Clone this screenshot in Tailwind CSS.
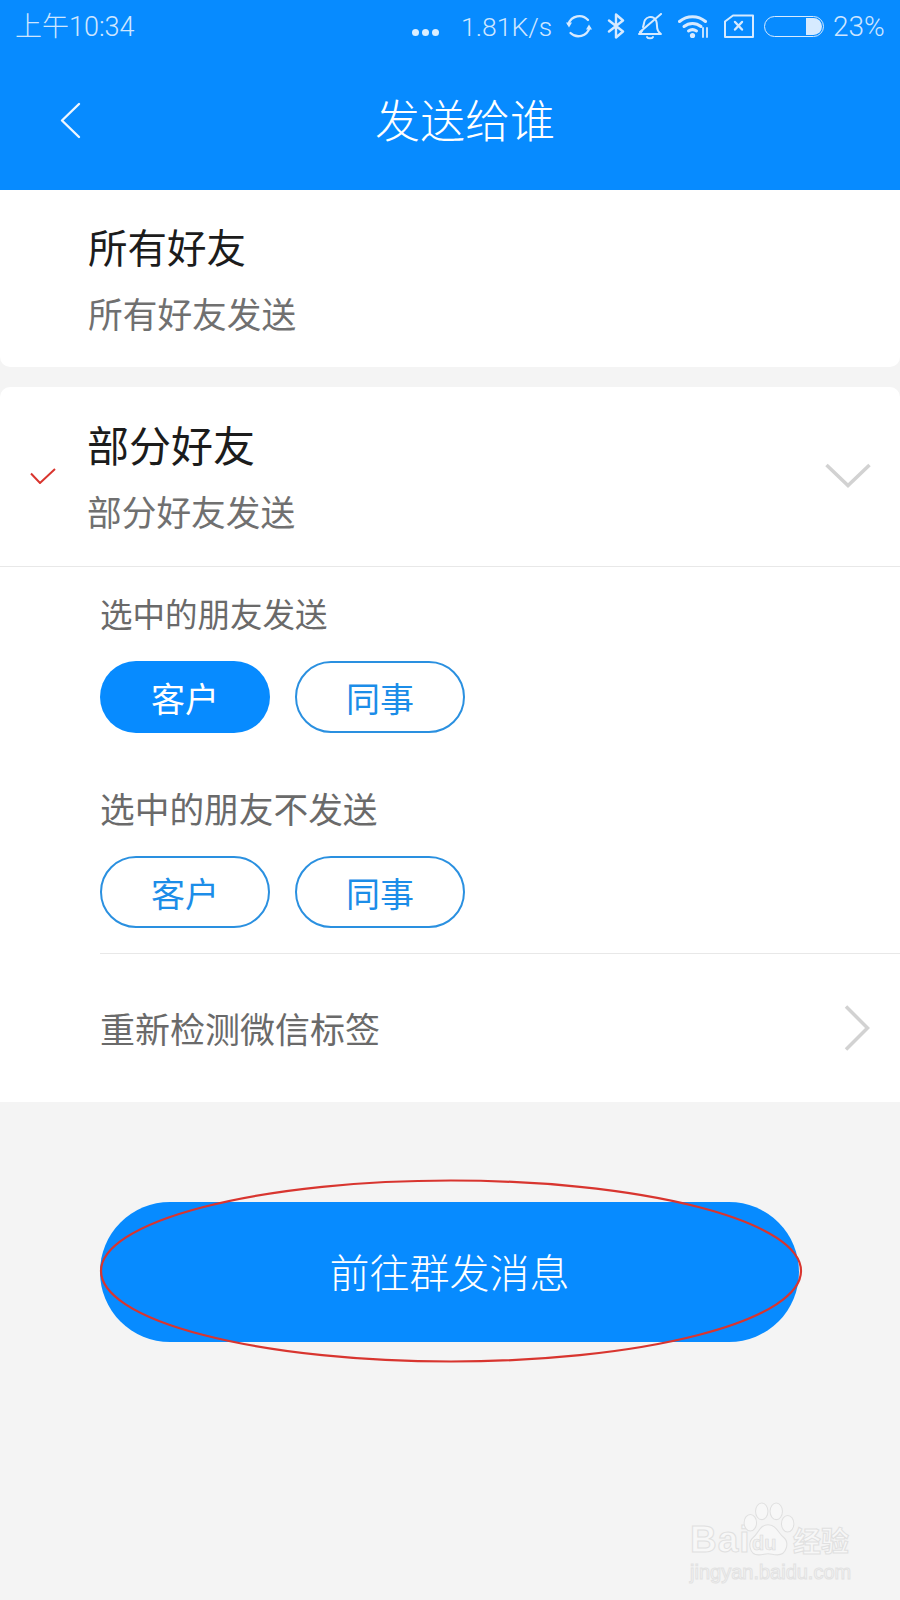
<!DOCTYPE html>
<html>
<head>
  <meta charset="UTF-8">
  <meta name="viewport" content="width=device-width, initial-scale=1.0">
  <script src="https://cdn.jsdelivr.net/npm/@tailwindcss/browser@4"></script>
</head>
<body class="bg-[#f4f4f4]">
  <div class="relative w-[900px] h-[1600px] overflow-hidden bg-[#f4f4f4] font-['Noto_Sans_CJK_SC',sans-serif]">
    <!-- header -->
    <header class="h-[190px] bg-[#078bff]">
      <div class="flex items-center h-[52px] pl-[15px] text-[#cfe6ff] font-['Roboto','Noto_Sans_CJK_SC',sans-serif] font-light">
        <span class="text-[27px] leading-[52px] pt-[1px] w-[397px] whitespace-nowrap">上午10:34</span>
        <div class="flex gap-[3px] w-[49px] pt-[12px]">
          <span class="w-[7px] h-[7px] rounded-full bg-[#dceeff]"></span>
          <span class="w-[7px] h-[7px] rounded-full bg-[#dceeff]"></span>
          <span class="w-[7px] h-[7px] rounded-full bg-[#dceeff]"></span>
        </div>
        <span class="text-[26.500px] leading-[52px] pt-[1px] w-[105px] whitespace-nowrap">1.81K/s</span>
        <svg class="w-[26px] h-[26px] mr-[15px]" viewBox="0 0 26 26" fill="none" stroke="#d6eaff" stroke-width="2.300" stroke-linecap="round">
          <path d="M22 7A11.500 11.500 0 0 0 2.500 11"/>
          <path d="M4.500 20A11.500 11.500 0 0 0 23.500 15"/>
          <path d="M0 9.500h6l-3 5z" fill="#d6eaff" stroke="none"/>
          <path d="M20 16.500h6l-3-5z" fill="#d6eaff" stroke="none"/>
        </svg>
        <svg class="w-[18px] h-[26px] mr-[12px]" viewBox="0 0 18 26" fill="none" stroke="#d6eaff" stroke-width="2.400" stroke-linejoin="round" stroke-linecap="round">
          <path d="M2 7.500l14 11-7 6V1.500l7 6-14 11"/>
        </svg>
        <svg class="w-[26px] h-[27px] mr-[15px]" viewBox="0 0 26 27" fill="none" stroke="#d6eaff" stroke-width="2" stroke-linecap="round" stroke-linejoin="round">
          <path d="M6 14c1-2 .8-5 2-7 2-3 6-4 9-2 3 2 3 5 3 8 0 3 1 6 4 8H2c1.500-1 2.500-2 3.200-3.500"/>
          <path d="M10 24c1 1.800 5 1.800 6 0"/>
          <path d="M3 19L24 1"/>
        </svg>
        <svg class="w-[33px] h-[26px] mr-[13px]" viewBox="0 0 33 26" fill="none" stroke="#d6eaff" stroke-linecap="round">
          <path d="M1.500 8.500a20 20 0 0 1 26 0" stroke-width="3"/>
          <path d="M6 13.500a13.500 13.500 0 0 1 17 0" stroke-width="3"/>
          <path d="M10.500 18a7 7 0 0 1 8 0" stroke-width="3"/>
          <circle cx="14.500" cy="22.500" r="2.600" fill="#d6eaff" stroke="none"/>
          <path d="M25 15v9M29 15v9" stroke-width="1.800"/>
        </svg>
        <svg class="w-[30px] h-[24px] mr-[10px]" viewBox="0 0 30 24" fill="none" stroke="#d6eaff" stroke-width="2" stroke-linejoin="round" stroke-linecap="round">
          <path d="M1 7.500L9 1.500h20V23H1z"/>
          <path d="M11 8l7 7.500M18 8l-7 7.500" stroke-width="2.400"/>
        </svg>
        <div class="relative w-[60px] h-[21px] mr-[9px] rounded-full border-[1.500px] border-[#d6eaff]">
          <span class="absolute right-[1px] top-[1px] bottom-[1px] w-[16px] rounded-r-full bg-[#d6eaff]"></span>
        </div>
        <span class="text-[28px] leading-[52px] pt-[1px] whitespace-nowrap">23%</span>
      </div>
      <div class="relative flex items-center justify-center h-[138px]">
        <svg class="absolute left-[59px] top-[50px] w-[22px] h-[37px]" viewBox="0 0 22 37" fill="none" stroke="#eef6ff" stroke-width="2.400" stroke-linecap="round" stroke-linejoin="round">
          <path d="M20 2L3 18.500 20 35"/>
        </svg>
        <h1 class="text-[45px] leading-[60px] text-white font-light ml-[30px] pb-[4px]">发送给谁</h1>
      </div>
    </header>

    <!-- all friends -->
    <section class="h-[177px] bg-white rounded-b-[10px] pl-[88px] pt-[32px]">
      <div class="text-[39.500px] leading-[48px] text-[#1c1c1c]">所有好友</div>
      <div class="mt-[23px] text-[34.700px] leading-[40px] text-[#707070]">所有好友发送</div>
    </section>

    <!-- some friends -->
    <section class="mt-[20px] h-[180px] bg-white rounded-t-[10px] flex items-center border-b border-[#e8e8e8]">
      <svg class="w-[26px] h-[16px] ml-[30px] mt-[-2px]" viewBox="0 0 26 16" fill="none" stroke="#d9352e" stroke-width="2">
        <path d="M1 5.500L10 15 25 1"/>
      </svg>
      <div class="ml-[32px] flex-1 pb-[3px]">
        <div class="text-[42px] leading-[48px] text-[#1c1c1c] ml-[-1px]">部分好友</div>
        <div class="mt-[23px] text-[34.700px] leading-[40px] text-[#707070] ml-[-1px]">部分好友发送</div>
      </div>
      <svg class="w-[46px] h-[25px] mr-[29px] mt-[-2px]" viewBox="0 0 46 25" fill="none" stroke="#d2d2d2" stroke-width="3.500">
        <path d="M1.500 2L23 22.500 44.500 2"/>
      </svg>
    </section>

    <!-- expanded tags -->
    <section class="h-[535px] bg-white pl-[100px] pt-[26px]">
      <div class="text-[32.500px] leading-[40px] text-[#6a6a6a]">选中的朋友发送</div>
      <div class="mt-[28px] flex gap-[25px]">
        <button class="w-[170px] h-[72px] rounded-full bg-[#078bff] text-white text-[34px]">客户</button>
        <button class="w-[170px] h-[72px] rounded-full border-[2.500px] border-[#2a90e0] text-[#1c8de8] text-[34px]">同事</button>
      </div>
      <div class="mt-[55px] text-[34.700px] leading-[40px] text-[#6a6a6a]">选中的朋友不发送</div>
      <div class="mt-[28px] flex gap-[25px]">
        <button class="w-[170px] h-[72px] rounded-full border-[2.500px] border-[#2a90e0] text-[#1c8de8] text-[34px]">客户</button>
        <button class="w-[170px] h-[72px] rounded-full border-[2.500px] border-[#2a90e0] text-[#1c8de8] text-[34px]">同事</button>
      </div>
      <div class="mt-[25px] border-t border-[#e8e8e8] h-[148px] flex items-center pr-[30px]">
        <span class="flex-1 text-[35px] leading-[40px] text-[#6a6a6a]">重新检测微信标签</span>
        <svg class="w-[26px] h-[46px]" viewBox="0 0 26 46" fill="none" stroke="#d2d2d2" stroke-width="3.500">
          <path d="M2 1.500L23.500 23 2 44.500"/>
        </svg>
      </div>
    </section>

    <!-- action button -->
    <button class="block mt-[100px] ml-[100px] w-[699px] h-[140px] rounded-full bg-[#078bff] text-white text-[40px] font-light pb-[2px]">前往群发消息</button>

    <!-- hand drawn annotation over the button -->
    <svg class="absolute left-[98px] top-[1178px] w-[706px] h-[186px]" viewBox="0 0 706 186" fill="none" stroke="#d8352f" stroke-width="2.200">
      <ellipse cx="353" cy="93" rx="350" ry="90.500"/>
    </svg>

    <!-- watermark -->
    <div class="absolute left-[690px] top-[1500px] w-[170px] h-[84px] font-['Liberation_Sans',sans-serif] text-[#f7f7f7]">
      <span class="absolute left-[0px] top-[17px] text-[37px] leading-[46px] font-bold tracking-[1px] [-webkit-text-stroke:1px_#e0e0e0]">Bai</span>
      <svg class="absolute left-[50px] top-[2px] w-[58px] h-[56px]" viewBox="0 0 50 54" fill="#f7f7f7" stroke="#e0e0e0" stroke-width="1">
        <ellipse cx="7" cy="20" rx="6" ry="8"/>
        <ellipse cx="18" cy="9" rx="6" ry="8"/>
        <ellipse cx="32" cy="9" rx="6" ry="8"/>
        <ellipse cx="43" cy="21" rx="6" ry="8"/>
        <path d="M24 22c8 0 10 8 15 12 6 5 3 17-6 17-4 0-6-1-9-1s-5 1-9 1c-9 0-11-12-5-17 5-4 6-12 14-12z"/>
      </svg>
      <span class="absolute left-[62px] top-[32px] text-[20px] leading-[22px] font-bold text-[#f0f0f0] [-webkit-text-stroke:0.500px_#d8d8d8]">du</span>
      <span class="absolute left-[103px] top-[23px] text-[28px] leading-[34px] font-bold font-['Noto_Sans_CJK_SC',sans-serif] whitespace-nowrap [-webkit-text-stroke:1px_#e0e0e0]">经验</span>
      <span class="absolute left-[0px] top-[60px] text-[20px] leading-[24px] whitespace-nowrap [-webkit-text-stroke:1px_#e2e2e2]">jingyan.baidu.com</span>
    </div>
  </div>
</body>
</html>
